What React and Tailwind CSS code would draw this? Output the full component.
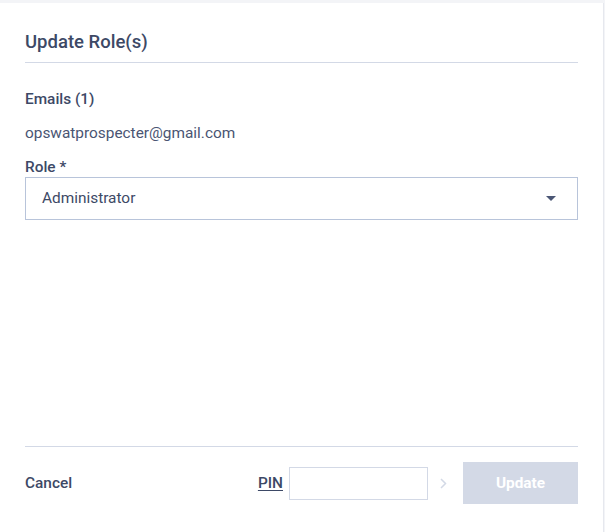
export default function App() {
  return (
    <div className="h-[532px] w-[605px] bg-[#f3f4f7] pt-[3px] font-['Roboto',sans-serif] overflow-hidden">
      <div className="flex h-[529px] w-[604px] flex-col bg-white px-[25px] border-r border-[#e6e8ee]">
        {/* header */}
        <div className="border-b border-[#d3d9e6] pt-[27px] pb-[8px]">
          <h2 className="text-[18.5px] font-medium leading-[24px] text-[#3d4966]">Update Role(s)</h2>
        </div>

        {/* body */}
        <div className="pt-[26px]">
          <p className="text-[15.4px] font-medium leading-[20px] text-[#3d4966]">Emails (1)</p>
          <p className="mt-[14px] text-[15.4px] leading-[20px] text-[#4a5573]">opswatprospecter@gmail.com</p>
          <label className="mt-[14px] block text-[15.4px] font-medium leading-[20px] text-[#3d4966]">Role *</label>
          <div className="flex h-[43px] w-full items-center justify-between border border-[#b8c4da] pl-[16px] pr-[21px]">
            <span className="pt-[1px] text-[15.4px] text-[#3d4966]">Administrator</span>
            <svg width="10" height="5" viewBox="0 0 10 5">
              <path d="M0 0h10L5 5z" fill="#4b5675" />
            </svg>
          </div>
        </div>

        {/* footer */}
        <div className="mt-auto flex items-center justify-between border-t border-[#d3d9e6] pt-[15px] pb-[28px]">
          <button className="pt-[2px] text-[15.4px] font-medium text-[#3d4966]">Cancel</button>
          <div className="flex items-center">
            <span className="pt-[2px] text-[15.4px] font-medium text-[#3d4966] underline underline-offset-2">PIN</span>
            <input className="ml-[6px] h-[33px] w-[139px] border border-[#d3d9e6] px-2 text-[14px] outline-none" />
            <svg className="ml-[12px]" width="7" height="11" viewBox="0 0 7 11">
              <path d="M1 1l4.5 4.5L1 10" fill="none" stroke="#d3d9e6" strokeWidth="1.5" />
            </svg>
            <button className="ml-[16px] h-[42px] w-[115px] bg-[#d3d9e6] pt-[2px] text-[15.4px] font-bold text-white">Update</button>
          </div>
        </div>
      </div>
    </div>
  )
}
